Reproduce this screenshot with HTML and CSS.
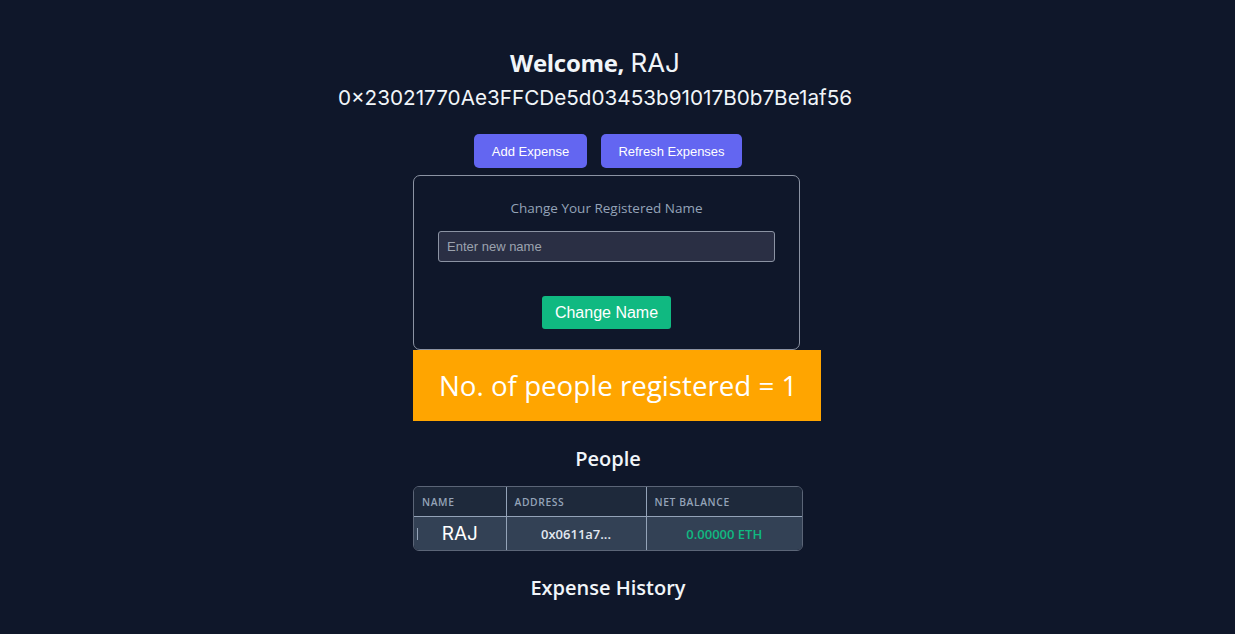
FILE: index.html
```html
<!DOCTYPE html>
<html lang="en">
<head>
<meta charset="utf-8">
<title>Expense Splitter</title>
<link rel="stylesheet" href="styles.css">
</head>
<body>
<div class="page">
  <header class="welcome">
    <h1 class="greet"><span class="greet-word">Welcome,</span> <span class="greet-name">RAJ</span></h1>
    <p class="wallet">0×23021770Ae3FFCDe5d03453b91017B0b7Be1af56</p>
  </header>
  <div class="actions">
    <button class="btn btn-primary btn-add">Add Expense</button>
    <button class="btn btn-primary btn-refresh">Refresh Expenses</button>
  </div>
  <main class="column">
    <section class="card">
      <h2 class="card-title">Change Your Registered Name</h2>
      <input class="name-input" type="text" placeholder="Enter new name">
      <button class="btn btn-green">Change Name</button>
    </section>
    <div class="count-bar">No. of people registered = 1</div>
    <h3 class="section-title people-title">People</h3>
    <div class="table-wrap">
      <table class="people">
        <colgroup>
          <col class="col-name">
          <col class="col-addr">
          <col class="col-bal">
        </colgroup>
        <thead>
          <tr><th>Name</th><th>Address</th><th>Net Balance</th></tr>
        </thead>
        <tbody>
          <tr>
            <td class="c-name"><span class="caret"></span>RAJ</td>
            <td class="addr">0x0611a7...</td>
            <td class="bal">0.00000 ETH</td>
          </tr>
        </tbody>
      </table>
    </div>
    <h3 class="section-title history-title">Expense History</h3>
  </main>
</div>
</body>
</html>
```

FILE: styles.css
```css
html, body {
  margin: 0;
  padding: 0;
  background: #0f172a;
}
body {
  font-family: "Open Sans", "Noto Sans", sans-serif;
  color: #f1f5f9;
  height: 634px;
  overflow: hidden;
}
.page {
  padding: 47px 19px 0 0;
}
.welcome {
  text-align: center;
  padding-right: 26px;
}
.greet {
  margin: 0;
  font-size: 24px;
  line-height: 32px;
  font-weight: 400;
}
.greet-word {
  font-family: "Open Sans", sans-serif;
  font-weight: 700;
  font-size: 24px;
  letter-spacing: -0.3px;
}
.greet-name {
  font-family: "Inter", sans-serif;
  font-weight: 400;
  font-size: 26px;
}
.wallet {
  margin: 5px 0 0;
  font-family: "Inter", sans-serif;
  font-size: 20.7px;
  line-height: 28px;
}
.actions {
  display: flex;
  justify-content: center;
  gap: 14px;
  margin-top: 22px;
}
.btn {
  border: none;
  cursor: pointer;
  font-family: "Liberation Sans", Arial, sans-serif;
  color: #fff;
  white-space: nowrap;
  padding: 0;
}
.btn-primary {
  background: #6366f1;
  border-radius: 5px;
  height: 34px;
  font-size: 13px;
}
.btn-add { width: 113px; }
.btn-refresh { width: 141px; }
.column {
  width: 390px;
  margin: 7px auto 0;
  display: flex;
  flex-direction: column;
  align-items: flex-start;
}
.card {
  box-sizing: border-box;
  width: 387px;
  height: 175px;
  border: 1px solid #8b93a3;
  border-radius: 7px;
  display: flex;
  flex-direction: column;
  align-items: center;
  padding-top: 23px;
}
.card-title {
  margin: 0;
  font-size: 13.5px;
  line-height: 18px;
  font-weight: 400;
  color: #94a3b8;
}
.name-input {
  box-sizing: border-box;
  width: 337px;
  height: 31px;
  margin-top: 14px;
  background: #2a2f44;
  border: 1px solid #8b93a3;
  border-radius: 3px;
  padding: 0 8px;
  font-family: "Liberation Sans", Arial, sans-serif;
  font-size: 13px;
  color: #e5e7eb;
  outline: none;
}
.name-input::placeholder {
  color: #9ca3af;
}
.btn-green {
  margin-top: 34px;
  width: 129px;
  height: 33px;
  background: #10b981;
  border-radius: 3px;
  font-size: 16px;
}
.count-bar {
  box-sizing: border-box;
  width: 408px;
  height: 71px;
  background: #ffa500;
  color: #fff;
  font-size: 27.7px;
  line-height: 71px;
  padding-left: 26px;
  white-space: nowrap;
}
.section-title {
  align-self: stretch;
  text-align: center;
  margin: 0;
  font-size: 20px;
  font-weight: 600;
  line-height: 28px;
  color: #f1f5f9;
}
.people-title {
  margin-top: 24px;
}
.table-wrap {
  margin-top: 13px;
  width: 390px;
  box-sizing: border-box;
  border: 1px solid #5b6577;
  border-radius: 6px;
  overflow: hidden;
}
.people {
  width: 100%;
  border-collapse: collapse;
  table-layout: fixed;
}
.col-name { width: 92px; }
.col-addr { width: 140px; }
.people th {
  background: #1e293b;
  height: 29px;
  text-align: left;
  padding: 0 8px;
  font-size: 10.3px;
  font-weight: 600;
  letter-spacing: 0.6px;
  text-transform: uppercase;
  color: #94a3b8;
  border-bottom: 1px solid #94a3b8;
}
.people td {
  background: #334155;
  height: 33px;
  text-align: center;
  padding: 0;
  font-size: 13px;
  font-weight: 600;
  color: #e2e8f0;
}
.people th + th,
.people td + td {
  border-left: 1px solid #94a3b8;
}
.people td.c-name {
  position: relative;
  font-family: "Inter", sans-serif;
  font-size: 19px;
  font-weight: 400;
  color: #fff;
}
.caret {
  position: absolute;
  left: 3px;
  top: 11px;
  width: 1px;
  height: 12px;
  background: #94a3b8;
}
.people td.bal {
  color: #10b981;
}
.history-title {
  margin-top: 23px;
}
```
